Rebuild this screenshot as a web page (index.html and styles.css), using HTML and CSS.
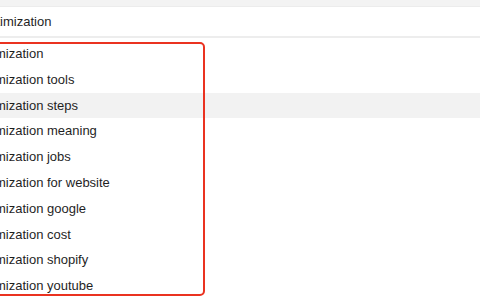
FILE: index.html
```html
<!DOCTYPE html>
<html lang="en">
<head>
    <meta charset="UTF-8">
    <title>Search suggestions</title>
    <link rel="stylesheet" href="styles.css">
</head>
<body>
    <div class="page">
        <div class="topbar"></div>
        <div class="search-box">optimization</div>
        <ul class="suggestions">
            <li>optimization</li>
            <li>optimization tools</li>
            <li class="active">optimization steps</li>
            <li>optimization meaning</li>
            <li>optimization jobs</li>
            <li>optimization for website</li>
            <li>optimization google</li>
            <li>optimization cost</li>
            <li>optimization shopify</li>
            <li>optimization youtube</li>
        </ul>
        <div class="mark"></div>
    </div>
</body>
</html>
```

FILE: styles.css
```css
body {
    margin: 0;
    background: #fff;
    overflow: hidden;
    font-family: 'Liberation Sans', Arial, sans-serif;
    color: #1f1f1f;
}
.page {
    position: relative;
    margin-left: -40px;
    width: 520px;
    height: 300px;
}
.topbar {
    height: 6px;
    background: #f3f3f3;
    border-bottom: 1px solid #ececec;
}
.search-box {
    height: 29px;
    line-height: 29px;
    padding-left: 22px;
    font-size: 13px;
    border-bottom: 2px solid #ededed;
}
.suggestions {
    list-style: none;
    margin: 0;
    padding: 3px 0 0;
}
.suggestions li {
    height: 25.8px;
    line-height: 25.8px;
    padding-left: 14px;
    font-size: 13px;
}
.suggestions li.active {
    background: #f2f2f2;
}
.mark {
    position: absolute;
    left: 20px;
    top: 42px;
    width: 221px;
    height: 250px;
    border: 2.5px solid #ea3220;
    border-radius: 5px;
}
```
